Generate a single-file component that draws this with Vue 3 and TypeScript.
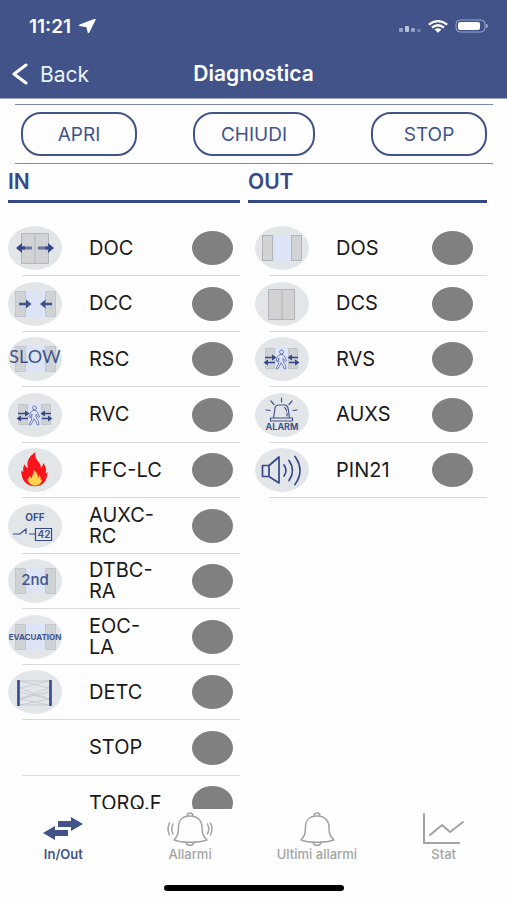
<script setup lang="ts">
import { ref } from 'vue'

interface Signal {
  label: string
  icon: string
}

const inputs: Signal[] = [
  { label: 'DOC', icon: 'opening' },
  { label: 'DCC', icon: 'closing' },
  { label: 'RSC', icon: 'slow' },
  { label: 'RVC', icon: 'passage' },
  { label: 'FFC-LC', icon: 'fire' },
  { label: 'AUXC-\nRC', icon: 'off' },
  { label: 'DTBC-\nRA', icon: 'second' },
  { label: 'EOC-\nLA', icon: 'evacuation' },
  { label: 'DETC', icon: 'beams' },
  { label: 'STOP', icon: '' },
  { label: 'TORQ.F', icon: '' },
]

const outputs: Signal[] = [
  { label: 'DOS', icon: 'open' },
  { label: 'DCS', icon: 'closed' },
  { label: 'RVS', icon: 'passage' },
  { label: 'AUXS', icon: 'alarm' },
  { label: 'PIN21', icon: 'speaker' },
]

const groups = [
  { name: 'IN', kind: 'in', items: inputs },
  { name: 'OUT', kind: 'out', items: outputs },
]

const commands = ['APRI', 'CHIUDI', 'STOP']
const tabs = ['In/Out', 'Allarmi', 'Ultimi allarmi', 'Stat']
const activeTab = ref('In/Out')

const apart = ['closing', 'slow', 'second', 'evacuation']
</script>

<template>
  <div class="screen">
    <header class="header">
      <div class="status">
        <span class="clock">11:21</span>
        <svg class="locate" width="17" height="14" viewBox="0 0 17 14"><path d="M16 .5 9.500 13.500 8 7.500 .8 6.300Z" fill="#fff" stroke="#fff" stroke-width="1.500" stroke-linejoin="round" /></svg>
        <svg class="cell" width="24" height="8" viewBox="0 0 24 8" fill="#fff">
          <rect x="1" y="3" width="4" height="4" rx="1" opacity=".45" />
          <rect x="7" y="1" width="4" height="6" rx="1" opacity=".65" />
          <rect x="13" y="3" width="4" height="4" rx="1" opacity=".45" />
          <rect x="19" y="4" width="4" height="3" rx="1" opacity=".25" />
        </svg>
        <svg class="wifi" width="20" height="13" viewBox="0 0 20 13" fill="none" stroke="#fff" stroke-width="2.300">
          <path d="M.8 4.600Q10-2.300 19.200 4.600M4 7.600Q10 3 16 7.600" />
          <path d="M6.500 9.600Q10 7 13.500 9.600L10 12.800Z" fill="#fff" stroke="none" />
        </svg>
        <svg class="battery" width="34" height="14" viewBox="0 0 34 14">
          <rect x="1" y="1" width="29" height="12" rx="4" fill="none" stroke="#9aa5c7" />
          <rect x="3" y="3" width="22" height="8" rx="2" fill="#fff" />
          <path d="M31.500 5q2 2 0 4Z" fill="#9aa5c7" stroke="#9aa5c7" />
        </svg>
      </div>
      <nav class="nav">
        <button class="back" type="button">
          <svg width="16" height="22" viewBox="0 0 16 22"><path d="M14 2 2 11l12 9" fill="none" stroke="#fff" stroke-width="3" stroke-linecap="round" stroke-linejoin="round" /></svg>
          <span>Back</span>
        </button>
        <h1 class="title">Diagnostica</h1>
      </nav>
    </header>

    <div class="commands">
      <button v-for="name in commands" :key="name" class="command" type="button">{{ name }}</button>
    </div>

    <main class="groups">
      <section v-for="group in groups" :key="group.kind" class="group" :class="group.kind">
        <h2 class="heading">{{ group.name }}</h2>
        <ul class="list">
          <li v-for="item in group.items" :key="item.label" class="row">
            <span class="pic">
              <svg v-if="item.icon" width="54" height="44" viewBox="0 0 54 44">
                <ellipse cx="27" cy="22" rx="27" ry="22" fill="#e3e6e9" />
                <g v-if="apart.includes(item.icon)">
                  <rect x="18" y="9" width="19" height="26" fill="#dce4f6" />
                  <path d="M7.500 9.500h10v25h-10ZM37.500 9.500h10v25h-10Z" fill="#d0d3d5" stroke="#c3c7cb" />
                </g>

                <g v-if="item.icon === 'opening'">
                  <path d="M13.500 7.500h27v30h-27ZM27 7.500v30" fill="#d0d2d3" stroke="#b5b8bb" />
                  <path d="M14 22h10M30 22h10" stroke="#6673a5" stroke-width="3" />
                  <path d="M8 22l6-5v3.500h3v3h-3V27ZM46 22l-6-5v3.500h-3v3h3V27Z" fill="#354887" />
                </g>
                <path v-else-if="item.icon === 'closing'" d="M11 20.800h7V17.500l5.500 4.500-5.500 4.500v-3.300h-7ZM44 20.800h-6.500V17.500L32 22l5.500 4.500v-3.300H44Z" fill="#3f5190" />
                <text v-else-if="item.icon === 'slow'" class="glyph slow" x="27" y="26">SLOW</text>
                <g v-else-if="item.icon === 'passage'" fill="none" stroke="#354887">
                  <rect x="19" y="11" width="14" height="22" fill="#dce4f6" stroke="none" />
                  <path d="M10.500 11.500h9v20h-9ZM33.500 11.500h9v20h-9Z" fill="#cfd2d4" stroke="#c0c4c8" />
                  <path d="M10 19.700h7V17.500l4.500 3-4.500 3v-2.200h-7ZM20 24.700h-7V22.500l-4.500 3 4.500 3v-2.200h7ZM43 19.700h-6V17.500l-4.500 3 4.500 3v-2.200h6ZM34 24.700h6V22.500l4.500 3-4.500 3v-2.200h-6Z" fill="#354887" stroke="none" />
                  <circle cx="26.500" cy="15" r="2" stroke="#5668a3" stroke-width=".8" />
                  <path d="M25 17.500h3l2 2.500 1.500 4-1 .7-2.500-3.500v3l2.500 4 .5 3.500h-2l-1-3-2-3-1.500 3.500-2 3-1.500-.7 2.500-4.500.5-6-1.500 3.500-1.500-.5 1-4Z" stroke="#5668a3" stroke-width=".8" />
                </g>
                <g v-else-if="item.icon === 'fire'">
                  <path d="M27.500 4C20 9 18.500 14 20 20c-2-.5-2.800-2-3-4-2 2-2.200 5-1.500 8l-2.200-1.500C13 31 17.500 38 27 38.300 35 38 39 33 39.500 24l-2 1.500c1-4 .8-7-2.500-10.500 0 2-.5 3.500-2 5 .5-6-7.500-8-5.500-16Z" fill="#f8141a" />
                  <path d="M25.500 22c1 4-2 5-1.500 8-1.500-.4-2-1.300-2.300-2.500-1 1.200-1 2.200-.7 3.400l-1.500-.7c0 4.300 3.500 7.300 7.500 7.500 4 0 7-3 7-6.500l-1.500.8c.5-2 0-3.700-1.500-5 .2 1.300-.2 2.200-1 2.800.5-3.500-2.500-6.800-4.500-7.800Z" fill="#ffd34d" />
                </g>
                <g v-else-if="item.icon === 'off'">
                  <text class="glyph off" x="27" y="17">OFF</text>
                  <path d="M5 30h7l6-5v5M21 30h6M27.500 24.500h16v12h-16Z" fill="none" stroke="#354887" stroke-width="1.200" />
                  <text class="glyph pin" x="36" y="34">42</text>
                </g>
                <text v-else-if="item.icon === 'second'" class="glyph second" x="27" y="26">2nd</text>
                <text v-else-if="item.icon === 'evacuation'" class="glyph evac" x="27" y="25">EVACUATION</text>
                <g v-else-if="item.icon === 'beams'" fill="none">
                  <path d="M12 11 41 18 12 29 41 35M41 11 12 18 41 29 12 35M12 11h29M12 35h29M12 22l29 7M41 22 12 29" stroke="#b6bdca" stroke-width=".6" />
                  <path d="M10.500 10v26M42.500 10v26" stroke="#354887" stroke-width="2.600" />
                </g>
                <g v-else-if="item.icon === 'open'">
                  <rect x="18" y="9" width="18" height="26" fill="#dce4f6" />
                  <path d="M7.500 9.500h10v25h-10ZM36.500 9.500h10v25h-10Z" fill="#d0d2d3" stroke="#b0b4b8" />
                </g>
                <path v-else-if="item.icon === 'closed'" d="M13.500 7.500h26v30h-26ZM27 7.500v30" fill="#d0d2d3" stroke="#b0b4b8" />
                <g v-else-if="item.icon === 'alarm'" fill="none" stroke="#42538a" stroke-width="1.200" stroke-linecap="round" stroke-linejoin="round">
                  <path d="M18.500 25 20 15q.5-3 3.500-3h6q3 0 3.500 3l1.500 10M15.500 25h22v3h-22ZM29.500 14.500q1.500.5 2 3.500M32 20v3M26.500 5v4M16 8l3 3.500M37 8l-3 3.500M11 17l4 .5M42 17l-4 .5" />
                  <text class="glyph alarm" x="27" y="37">ALARM</text>
                </g>
                <path v-else-if="item.icon === 'speaker'" d="M7.500 17.500h6.500v11H7.500ZM14 17.500 24 9v26L14 28.500M29 17q4 5.500 0 11M34 12.500q7 10 0 20M40 8.500q10 14 0 28" fill="none" stroke="#354887" stroke-width="1.700" stroke-linecap="round" stroke-linejoin="round" />
              </svg>
            </span>
            <span class="label">{{ item.label }}</span>
            <span class="dot"></span>
          </li>
        </ul>
      </section>
    </main>

    <footer class="footer">
      <nav class="tabs">
        <button v-for="tab in tabs" :key="tab" class="tab" :class="{ active: tab === activeTab }" type="button" @click="activeTab = tab">
          <svg width="46" height="34" viewBox="0 0 46 34" fill="none" stroke="currentColor" stroke-width="1.500" stroke-linecap="round" stroke-linejoin="round">
            <path v-if="tab === 'In/Out'" d="M18 9h13V5l12 7-12 7v-4H18ZM28 18H15v-4L3 21l12 7v-4h13Z" fill="currentColor" stroke="none" />
            <path v-else-if="tab === 'Stat'" d="M3 2v29h35M9 23l12-10 8 7 13-10" stroke-width="2" />
            <g v-else>
              <path d="M23 4C15 4 11.500 9 11.500 15c0 7-1 9-4.500 13 8 3 24 3 33 0-4-4-5-6-5-13 0-6-4-11-12-11ZM20 4c0-4 6-4 6 0M19 30.500c1 4 7 4 8 0" />
              <path v-if="tab === 'Allarmi'" d="M6 12q-2.500 5 0 10M2.500 11q-3 6 0 12M40.500 12q2.500 5 0 10M43.500 11q3 6 0 12" />
            </g>
          </svg>
          <span>{{ tab }}</span>
        </button>
      </nav>
      <div class="home"></div>
    </footer>
  </div>
</template>

<style>
body {
  background: #fff;
}
</style>

<style scoped>
.screen {
  display: flex;
  flex-direction: column;
  height: 100vh;
  overflow: hidden;
  background: #fefefe;
  color: #1a1a1a;
  font-family: Inter, "Liberation Sans", sans-serif;
}

button {
  padding: 0;
  border: 0;
  background: none;
  color: inherit;
  font: inherit;
  cursor: pointer;
}

h1,
h2,
ul {
  margin: 0;
  padding: 0;
}

svg {
  display: block;
  flex: none;
}

.header {
  flex: none;
  padding-top: 16px;
  border-bottom: 1px solid #a0a6c4;
  background: #42538a;
  color: #fff;
}

.status {
  display: flex;
  align-items: center;
  height: 20px;
  padding: 0 18px 0 29px;
}

.clock {
  font-size: 19px;
  font-weight: 600;
}

.locate {
  margin-left: 8px;
}

.cell {
  margin: 6px 6px 0 auto;
}

.wifi {
  margin-right: 7px;
}

.nav {
  display: grid;
  grid-template-columns: 1fr auto 1fr;
  align-items: center;
  height: 62px;
  padding: 14px 12px 0;
  box-sizing: border-box;
}

.back {
  display: flex;
  align-items: center;
  gap: 12px;
  justify-self: start;
  color: #e9f3ff;
  font-size: 21px;
}

.title {
  font-size: 21px;
  font-weight: 600;
  line-height: 24px;
}

.commands {
  display: flex;
  flex: none;
  justify-content: space-between;
  margin: 5px 14px 0 15px;
  padding: 7px 6px;
  border: solid #8087b0;
  border-width: 1px 0;
}

.command {
  min-width: 116px;
  height: 44px;
  padding: 0 26px;
  border: 2px solid #42538a;
  border-radius: 20px;
  color: #42538a;
  font-size: 19px;
}

.groups {
  display: grid;
  flex: 1;
  grid-template-columns: 232fr 239fr;
  gap: 8px;
  min-height: 0;
  padding: 0 20px 0 8px;
  overflow: hidden;
}

.heading {
  height: 39px;
  border-bottom: 3px solid #354887;
  box-sizing: border-box;
  color: #354887;
  font-size: 21px;
  font-weight: 600;
  line-height: 36px;
}

.list {
  padding-top: 18px;
  list-style: none;
}

.out .list {
  padding-left: 7px;
}

.row {
  display: flex;
  align-items: center;
  height: 55px;
  margin-left: 14px;
  padding-right: 7px;
  border-bottom: 1px solid #d9d9db;
  box-sizing: border-box;
}

.row:nth-child(even) {
  height: 56px;
}

.out .row {
  padding-right: 14px;
}

.pic {
  flex: none;
  width: 54px;
  margin-left: -14px;
}

.label {
  flex: 1;
  padding-left: 27px;
  font-size: 20px;
  line-height: 21px;
  white-space: pre-line;
}

.dot {
  flex: none;
  width: 41px;
  height: 34px;
  border-radius: 50%;
  background: #808080;
}

.glyph {
  fill: #42538a;
  stroke: none;
  text-anchor: middle;
}

.slow {
  font-family: Lato, sans-serif;
  font-size: 18px;
}

.off {
  font-size: 10px;
  font-weight: 700;
}

.pin {
  font-size: 10px;
  font-weight: 600;
}

.second {
  font-size: 15px;
  font-weight: 500;
}

.evac {
  font-size: 8px;
  font-weight: 700;
}

.alarm {
  font-size: 9px;
  font-weight: 700;
}

.footer {
  flex: none;
  padding: 3px 0 9px;
}

.tabs {
  display: grid;
  grid-template-columns: repeat(4, 1fr);
}

.tab {
  display: flex;
  flex-direction: column;
  align-items: center;
  color: #a3a3a3;
  font-size: 13px;
  font-weight: 500;
  line-height: 16px;
}

.active {
  color: #42538a;
  font-weight: 600;
}

.home {
  width: 180px;
  height: 6px;
  margin: 23px auto 0;
  border-radius: 3px;
  background: #000;
}
</style>
